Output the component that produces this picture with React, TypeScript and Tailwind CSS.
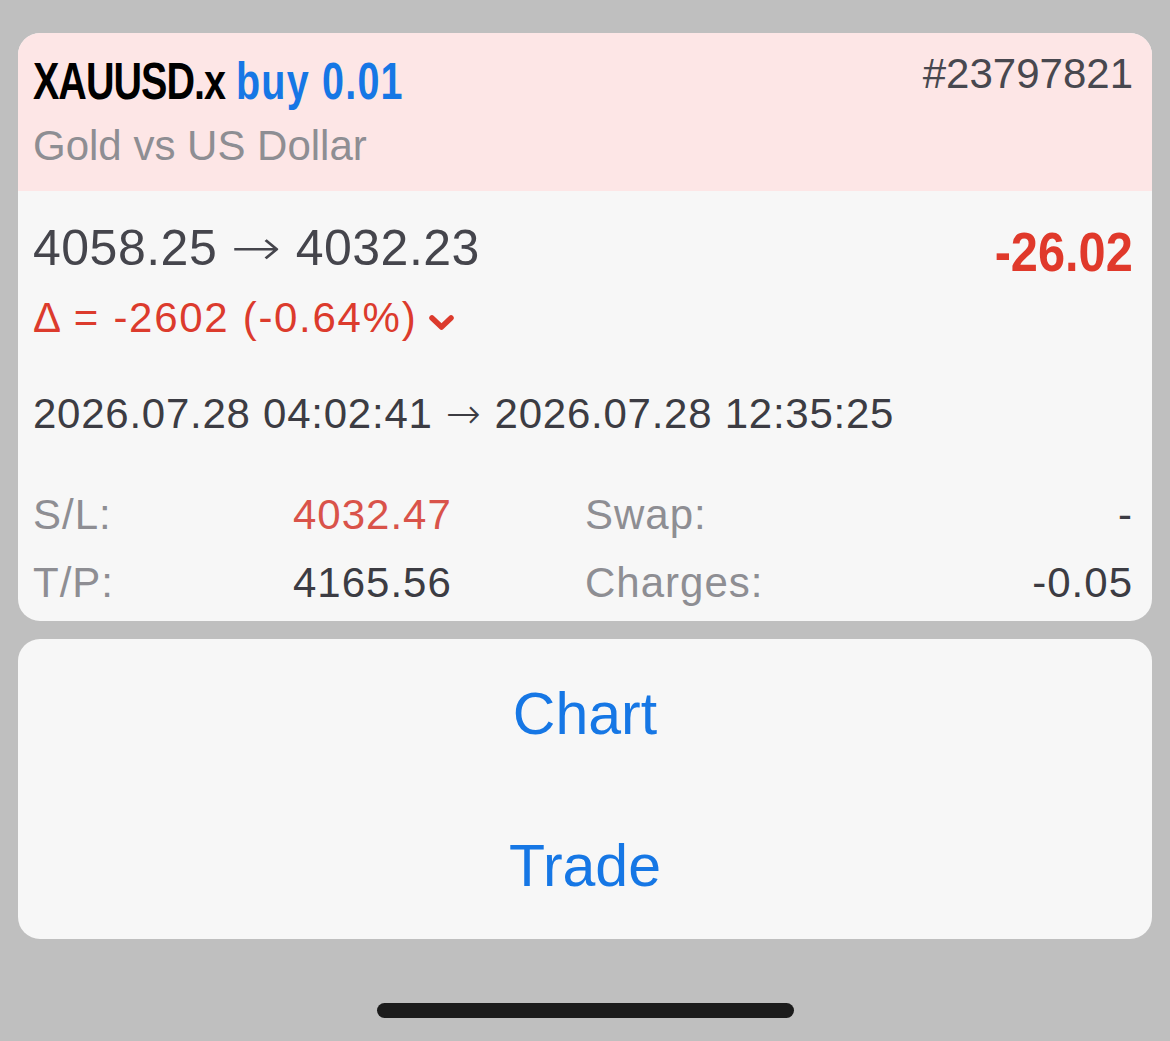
import React from 'react';

const sans = "font-['Liberation_Sans','Helvetica_Neue',Arial,sans-serif]";

function Arrow() {
  return <span className="mx-[18px] inline-block scale-x-[1.2] font-['DejaVu_Sans',sans-serif] font-light">→</span>;
}

function InfoRow({ label, value, valueClass, label2, value2 }: {
  label: string;
  value: string;
  valueClass: string;
  label2: string;
  value2: string;
}) {
  return (
    <div className="grid grid-cols-[260px_292px_1fr_auto] text-[42px] leading-[68px] tracking-[1px]">
      <span className="text-[#8e8e93]">{label}</span>
      <span className={valueClass}>{value}</span>
      <span className="text-[#8e8e93]">{label2}</span>
      <span className="text-[#3c3c43]">{value2}</span>
    </div>
  );
}

export default function App() {
  return (
    <div className={`min-h-[1041px] w-full bg-[#bfbfbf] px-[18px] pt-[33px] ${sans}`}>
      {/* position card */}
      <div className="overflow-hidden rounded-[22px] bg-[#f7f7f7]">
        <div className="flex h-[158px] items-start justify-between bg-[#fde6e6] pl-[15px] pr-[19px] pt-[17px]">
          <div>
            <div className="origin-left scale-x-[0.76] whitespace-nowrap text-[52px] font-bold leading-[62px]">
              <span className="tracking-[-1.3px] text-black">XAUUSD.x</span>{' '}
              <span className="tracking-[1.6px] text-[#1677e5]">buy 0.01</span>
            </div>
            <div className="mt-[10px] text-[42px] leading-[48px] text-[#8e8e93]">Gold vs US Dollar</div>
          </div>
          <div className="text-[42px] leading-[48px] text-[#48484f]">#23797821</div>
        </div>

        <div className="pl-[15px] pr-[19px] pt-[28px] pb-[4px]">
          <div className="flex items-start justify-between">
            <div>
              <div className="flex items-center text-[50px] leading-[58px] tracking-[0.5px] text-[#45454c]">
                <span>4058.25</span>
                <Arrow />
                <span>4032.23</span>
              </div>
              <div className="mt-[16px] flex items-center text-[42px] leading-[50px] tracking-[1.7px] text-[#dc3b2d]">
                <span>Δ = -2602 (-0.64%)</span>
                <svg className="ml-[11px] mt-[8px]" width="27" height="19" viewBox="0 0 27 19">
                  <path d="M4 5 L13.5 14 L23 5" fill="none" stroke="#dc3b2d" strokeWidth="5.5" strokeLinecap="round" strokeLinejoin="round" />
                </svg>
              </div>
            </div>
            <div className="origin-right scale-x-[0.87] text-[56px] font-bold leading-[66px] text-[#e0392b]">-26.02</div>
          </div>

          <div className="mt-[46px] flex items-center text-[42px] leading-[50px] tracking-[0.75px] text-[#3c3c43]">
            <span>2026.07.28 04:02:41</span>
            <span className="mx-[13px] font-['DejaVu_Sans',sans-serif] font-light">→</span>
            <span>2026.07.28 12:35:25</span>
          </div>

          <div className="mt-[42px]">
            <InfoRow label="S/L:" value="4032.47" valueClass="text-[#d9534a]" label2="Swap:" value2="-" />
            <InfoRow label="T/P:" value="4165.56" valueClass="text-[#3c3c43]" label2="Charges:" value2="-0.05" />
          </div>
        </div>
      </div>

      {/* actions card */}
      <div className="mt-[18px] flex h-[300px] flex-col items-center gap-[93px] rounded-[22px] bg-[#f7f7f7] pt-[46px]">
        <button className="text-[59px] leading-[59px] text-[#1677e5]">Chart</button>
        <button className="text-[59px] leading-[59px] text-[#1677e5]">Trade</button>
      </div>

      {/* home indicator */}
      <div className="flex justify-center pt-[64px]">
        <div className="h-[15px] w-[417px] rounded-full bg-[#1b1b1b]" />
      </div>
    </div>
  );
}
